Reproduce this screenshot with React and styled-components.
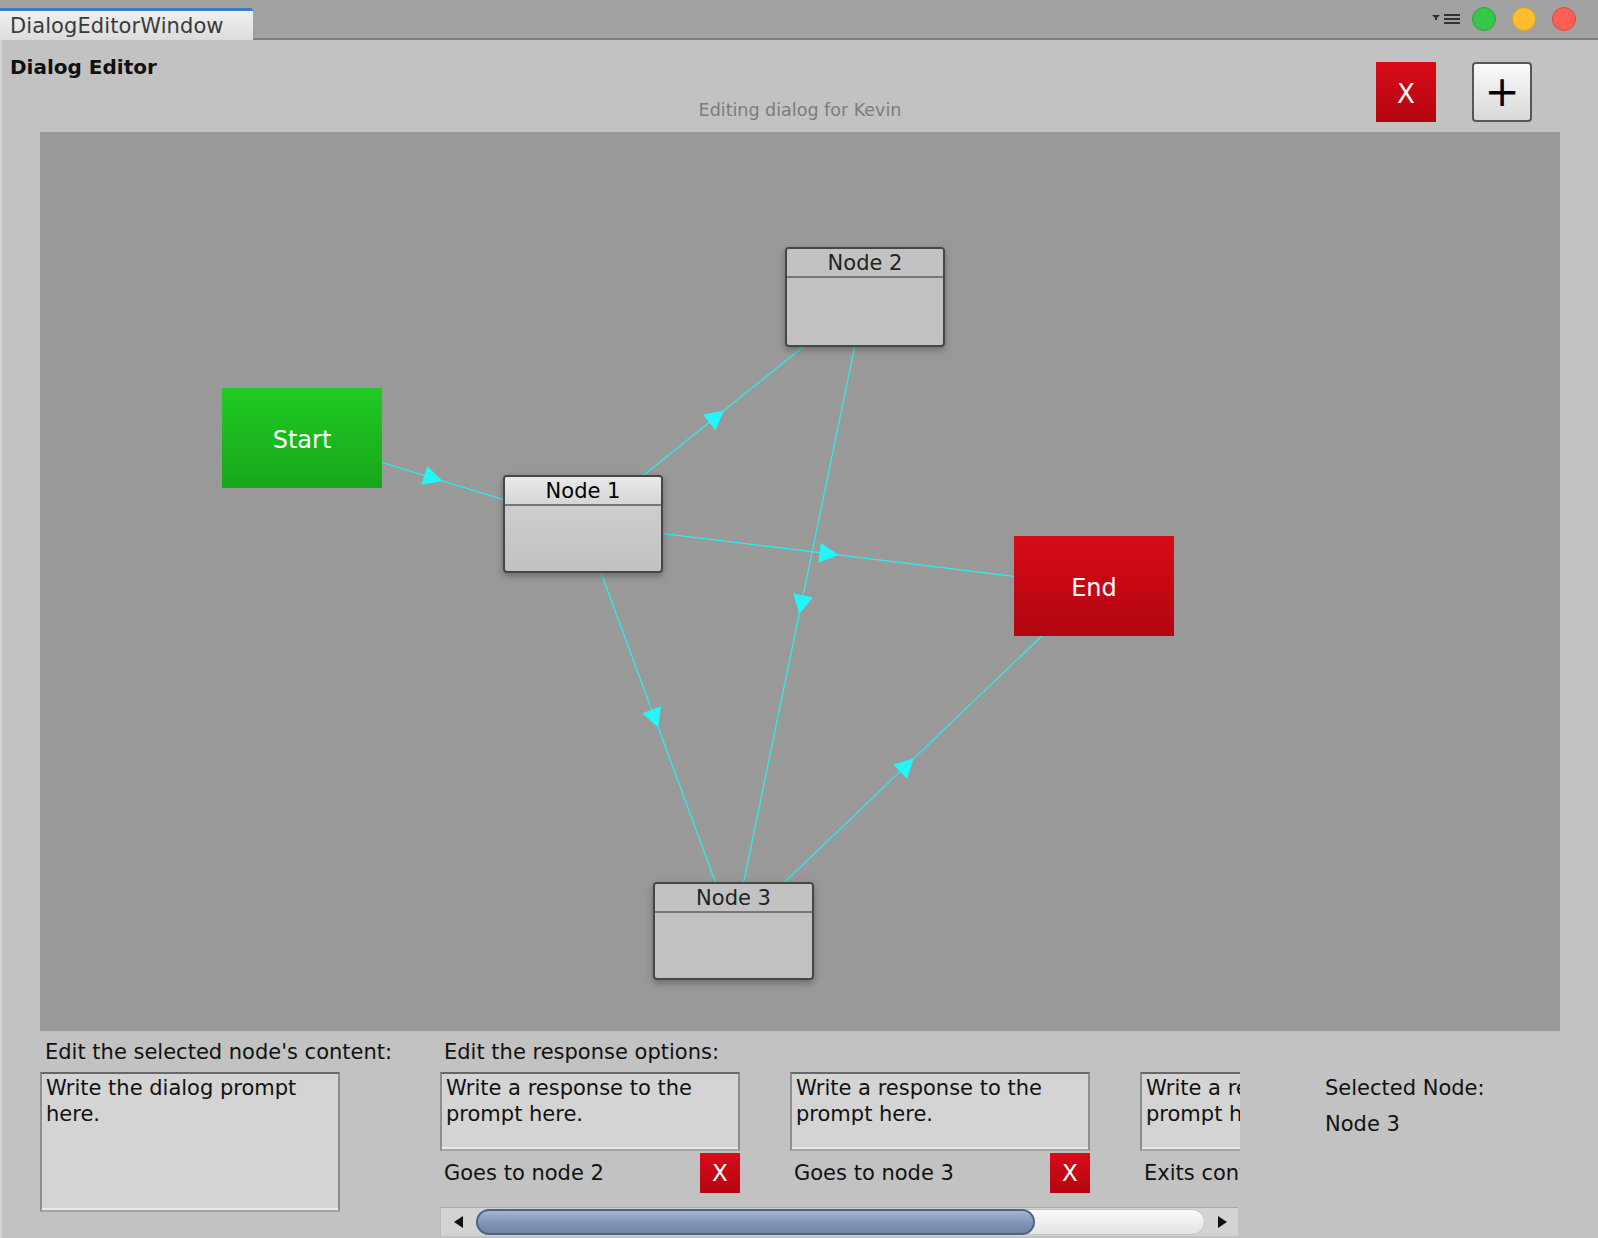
import React from "react";
import styled, { createGlobalStyle } from "styled-components";

const FONT = `"DejaVu Sans", "Liberation Sans", sans-serif`;

const GlobalStyle = createGlobalStyle`
  html, body {
    margin: 0;
    padding: 0;
    background: #c2c2c2;
    overflow: hidden;
  }
  * {
    box-sizing: border-box;
  }
`;

// graph data, positions are relative to the canvas
const nodes = [
  { id: "start", label: "Start", kind: "start", x: 182, y: 256, w: 160, h: 100 },
  { id: "n1", label: "Node 1", kind: "node", selected: true, x: 463, y: 343, w: 160, h: 98 },
  { id: "n2", label: "Node 2", kind: "node", x: 745, y: 115, w: 160, h: 100 },
  { id: "end", label: "End", kind: "end", x: 974, y: 404, w: 160, h: 100 },
  { id: "n3", label: "Node 3", kind: "node", x: 613, y: 750, w: 161, h: 98 },
];

const links = [
  ["start", "n1"],
  ["n1", "n2"],
  ["n1", "end"],
  ["n1", "n3"],
  ["n2", "n3"],
  ["n3", "end"],
];

const responses = [
  { text: "Write a response to the prompt here.", target: "Goes to node 2" },
  { text: "Write a response to the prompt here.", target: "Goes to node 3" },
  { text: "Write a response to the prompt here.", target: "Exits conversation" },
];

const Window = styled.div`
  width: 1598px;
  height: 1238px;
  display: flex;
  flex-direction: column;
  font-family: ${FONT};
  background: #c2c2c2;
  overflow: hidden;
`;

const TopBar = styled.div`
  height: 40px;
  flex-shrink: 0;
  background: #a2a2a2;
  border-bottom: 2px solid #7e7e7e;
  display: flex;
  align-items: flex-end;
  justify-content: space-between;
`;

const Tab = styled.div`
  width: 253px;
  height: 32px;
  margin-bottom: -2px;
  border-top: 3px solid #3d7ac6;
  border-top-right-radius: 3px;
  background: linear-gradient(#f0f0f0, #dcdcdc);
  color: #3a3a3a;
  font-size: 21px;
  line-height: 27px;
  padding: 2px 0 0 10px;
  letter-spacing: 0.1px;
`;

const WindowControls = styled.div`
  align-self: center;
  display: flex;
  align-items: center;
  gap: 16px;
  padding-right: 22px;
`;

const MenuIcon = styled.svg`
  margin-right: -6px;
`;

const Light = styled.span`
  width: 24px;
  height: 24px;
  border-radius: 50%;
  background: ${(p) => p.$color};
  border: 1px solid ${(p) => p.$edge};
`;

const Main = styled.div`
  flex: 1;
  display: flex;
  flex-direction: column;
  border-left: 2px solid #d4d4d4;
`;

const Header = styled.div`
  height: 92px;
  display: grid;
  grid-template-columns: 1fr auto 1fr;
`;

const Title = styled.div`
  padding: 15px 0 0 8px;
  font-size: 20px;
  line-height: 24px;
  font-weight: bold;
  color: #111;
`;

const Subtitle = styled.div`
  align-self: end;
  padding-bottom: 12px;
  font-size: 17.5px;
  line-height: 20px;
  color: #7c7c7c;
`;

const HeaderActions = styled.div`
  display: flex;
  justify-content: flex-end;
  align-items: flex-start;
  gap: 36px;
  padding: 22px 66px 0 0;
`;

const RedButton = styled.button`
  width: ${(p) => p.$size}px;
  height: ${(p) => p.$size}px;
  padding: ${(p) => (p.$size > 50 ? 4 : 1)}px 0 0;
  border: none;
  background: linear-gradient(#d90b18, #b20611);
  color: #fff;
  font-family: ${FONT};
  font-size: ${(p) => (p.$size > 50 ? 26 : 23)}px;
  line-height: 1;
  flex-shrink: 0;
`;

const PlusButton = styled.button`
  width: 60px;
  height: 60px;
  padding: 0;
  border: 2px solid #565656;
  border-radius: 4px;
  background: linear-gradient(#fbfbfb, #d8d8d8);
  color: #000;
  font-family: ${FONT};
  font-size: 42px;
  line-height: 1;
`;

const Canvas = styled.div`
  position: relative;
  height: 899px;
  margin: 0 38px 0 38px;
  background: #999999;
  overflow: hidden;
`;

const Wires = styled.svg`
  position: absolute;
  inset: 0;
`;

const Terminal = styled.div`
  position: absolute;
  left: ${(p) => p.$x}px;
  top: ${(p) => p.$y}px;
  width: ${(p) => p.$w}px;
  height: ${(p) => p.$h}px;
  padding-top: 4px;
  display: flex;
  align-items: center;
  justify-content: center;
  color: #fff;
  font-size: 24px;
  background: ${(p) =>
    p.$kind === "start"
      ? "linear-gradient(#20cb23, #17a61a)"
      : "linear-gradient(#d80b18, #b10611)"};
`;

const NodeBox = styled.div`
  position: absolute;
  left: ${(p) => p.$x}px;
  top: ${(p) => p.$y}px;
  width: ${(p) => p.$w}px;
  height: ${(p) => p.$h}px;
  border: 2px solid #464646;
  border-radius: 4px;
  background: ${(p) =>
    p.$selected ? "linear-gradient(#d2d2d2, #c2c2c2)" : "#c1c1c1"};
  box-shadow: 0 3px 7px rgba(0, 0, 0, 0.3);
  display: flex;
  flex-direction: column;
`;

const NodeHeader = styled.div`
  height: 29px;
  padding-top: 2px;
  border-bottom: 2px solid #777;
  border-radius: 2px 2px 0 0;
  background: ${(p) =>
    p.$selected ? "linear-gradient(#e9e9e9, #d6d6d6)" : "#c2c2c2"};
  color: ${(p) => (p.$selected ? "#000" : "#222")};
  font-size: 21px;
  line-height: 25px;
  text-align: center;
`;

const Inspector = styled.div`
  flex: 1;
  display: flex;
  align-items: flex-start;
  padding: 9px 0 0 38px;
`;

const Column = styled.div`
  width: ${(p) => p.$width}px;
  margin-left: ${(p) => p.$offset || 0}px;
  display: flex;
  flex-direction: column;
  gap: 7px;
  flex-shrink: 0;
`;

const Label = styled.div`
  font-size: 21px;
  line-height: 25px;
  padding-left: ${(p) => p.$inset ?? 5}px;
  color: #111;
  white-space: nowrap;
`;

const Field = styled.div`
  width: 300px;
  height: ${(p) => p.$height}px;
  flex-shrink: 0;
  background: #d4d4d4;
  border: 2px solid #8e8e8e;
  border-top-color: #676767;
  border-bottom-color: #a4a4a4;
  box-shadow: inset 0 -2px 0 #e9e9e9;
  padding: 1px 4px;
  font-size: 21px;
  line-height: 26px;
  color: #111;
`;

const ResponseScroller = styled.div`
  width: 800px;
  overflow: hidden;
`;

const ResponseTrack = styled.div`
  display: flex;
  gap: 50px;
`;

const ResponseItem = styled.div`
  width: 300px;
  flex-shrink: 0;
  display: flex;
  flex-direction: column;
  gap: 3px;
`;

const ResponseRow = styled.div`
  height: 40px;
  display: flex;
  align-items: center;
  justify-content: space-between;
  font-size: 21px;
  color: #111;
  padding: 0 0 3px 4px;
  white-space: nowrap;
`;

const ScrollBar = styled.div`
  width: 798px;
  height: 29px;
  margin-top: 13px;
  display: flex;
  align-items: center;
  background: #d3d3d3;
  border-top: 1px solid #a9a9a9;
  border-left: 1px solid #b9b9b9;
`;

const ScrollArrow = styled.div`
  width: ${(p) => p.$width}px;
  height: 100%;
  display: flex;
  align-items: center;
  justify-content: center;
`;

const ScrollTrack = styled.div`
  flex: 1;
  height: 26px;
  border-radius: 13px;
  background: linear-gradient(#fafafa, #e2e2e2);
  box-shadow: inset 0 0 0 1px #c2c2c2;
  display: flex;
`;

const ScrollThumb = styled.div`
  width: ${(p) => p.$width}px;
  height: 100%;
  border-radius: 13px;
  border: 2px solid #4f6386;
  background: linear-gradient(#a5b6d0, #8095b6 55%, #6d84a8);
`;

const SelectionInfo = styled.div`
  margin-left: 85px;
  padding-top: 36px;
  display: flex;
  flex-direction: column;
  gap: 11px;
  color: #111;
`;

const InfoLine = styled.div`
  font-size: 21px;
  line-height: 25px;
  white-space: nowrap;
`;

function Arrow({ a, b }) {
  const ax = a.x + a.w / 2;
  const ay = a.y + a.h / 2;
  const bx = b.x + b.w / 2;
  const by = b.y + b.h / 2;
  const len = Math.hypot(bx - ax, by - ay);
  const ux = (bx - ax) / len;
  const uy = (by - ay) / len;
  const mx = (ax + bx) / 2;
  const my = (ay + by) / 2;
  const cx = mx - ux * 19;
  const cy = my - uy * 19;
  const pts = [
    [mx, my],
    [cx - uy * 10, cy + ux * 10],
    [cx + uy * 10, cy - ux * 10],
  ]
    .map((p) => p.join(","))
    .join(" ");
  return (
    <g>
      <line x1={ax} y1={ay} x2={bx} y2={by} stroke="#22f2f4" strokeWidth="1.2" />
      <polygon points={pts} fill="#22f6f8" />
    </g>
  );
}

const byId = Object.fromEntries(nodes.map((n) => [n.id, n]));

export default function App() {
  return (
    <Window>
      <GlobalStyle />
      <TopBar>
        <Tab>DialogEditorWindow</Tab>
        <WindowControls>
          <MenuIcon width="30" height="12" viewBox="0 0 30 12">
            <path d="M0 2h8l-4 4z" fill="#2e2e2e" />
            <rect x="3" y="5" width="2" height="2" fill="#2e2e2e" />
            <rect x="12" y="1" width="16" height="2" fill="#333" />
            <rect x="12" y="5" width="16" height="2" fill="#333" />
            <rect x="12" y="9" width="16" height="2" fill="#333" />
          </MenuIcon>
          <Light $color="#34c749" $edge="#2aa63c" />
          <Light $color="#febc2e" $edge="#dea123" />
          <Light $color="#fe5f57" $edge="#e0443e" />
        </WindowControls>
      </TopBar>

      <Main>
        <Header>
          <Title>Dialog Editor</Title>
          <Subtitle>Editing dialog for Kevin</Subtitle>
          <HeaderActions>
            <RedButton $size={60}>X</RedButton>
            <PlusButton>+</PlusButton>
          </HeaderActions>
        </Header>

        <Canvas>
          <Wires width="100%" height="100%">
            {links.map(([from, to]) => (
              <Arrow key={from + to} a={byId[from]} b={byId[to]} />
            ))}
          </Wires>
          {nodes.map((n) =>
            n.kind === "node" ? (
              <NodeBox key={n.id} $x={n.x} $y={n.y} $w={n.w} $h={n.h} $selected={n.selected}>
                <NodeHeader $selected={n.selected}>{n.label}</NodeHeader>
              </NodeBox>
            ) : (
              <Terminal key={n.id} $kind={n.kind} $x={n.x} $y={n.y} $w={n.w} $h={n.h}>
                {n.label}
              </Terminal>
            )
          )}
        </Canvas>

        <Inspector>
          <Column $width={300}>
            <Label>Edit the selected node's content:</Label>
            <Field $height={140}>Write the dialog prompt here.</Field>
          </Column>

          <Column $width={800} $offset={100}>
            <Label $inset={4}>Edit the response options:</Label>
            <ResponseScroller>
              <ResponseTrack>
                {responses.map((r, i) => (
                  <ResponseItem key={i}>
                    <Field $height={79}>{r.text}</Field>
                    <ResponseRow>
                      {r.target}
                      <RedButton $size={40}>X</RedButton>
                    </ResponseRow>
                  </ResponseItem>
                ))}
              </ResponseTrack>
              <ScrollBar>
                <ScrollArrow $width={35}>
                  <svg width="10" height="12" viewBox="0 0 10 12">
                    <path d="M9 0v12L0 6z" fill="#111" />
                  </svg>
                </ScrollArrow>
                <ScrollTrack>
                  <ScrollThumb $width={559} />
                </ScrollTrack>
                <ScrollArrow $width={33}>
                  <svg width="10" height="12" viewBox="0 0 10 12">
                    <path d="M1 0v12l9-6z" fill="#111" />
                  </svg>
                </ScrollArrow>
              </ScrollBar>
            </ResponseScroller>
          </Column>

          <SelectionInfo>
            <InfoLine>Selected Node:</InfoLine>
            <InfoLine>Node 3</InfoLine>
          </SelectionInfo>
        </Inspector>
      </Main>
    </Window>
  );
}
